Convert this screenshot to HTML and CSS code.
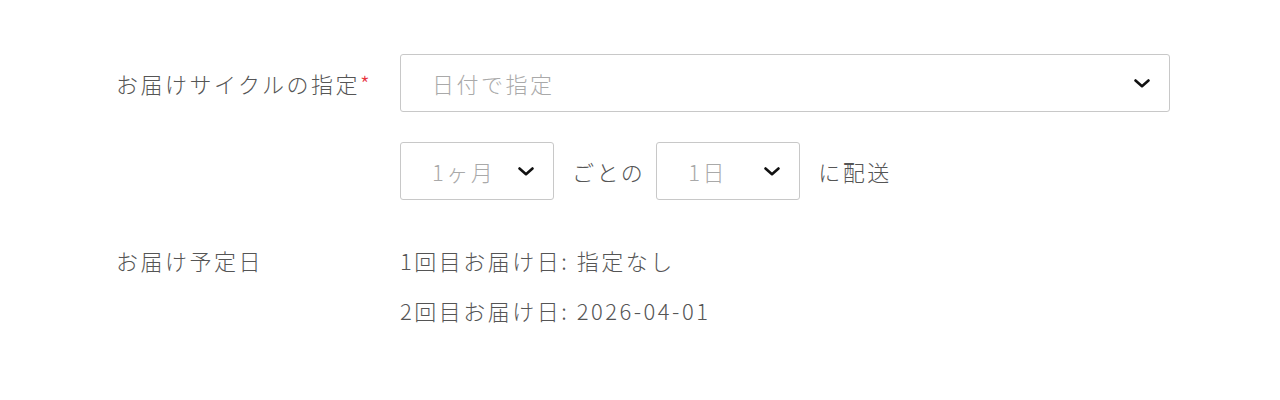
FILE: index.html
```html
<!DOCTYPE html>
<html lang="ja">
<head>
<meta charset="utf-8">
<link rel="stylesheet" href="styles.css">
</head>
<body>
<div class="form">
  <div class="row">
    <div class="label">お届けサイクルの指定<span class="req">*</span></div>
    <div class="field">
      <div class="select wide"><span class="ph">日付で指定</span>
        <svg class="chev" width="16" height="9" viewBox="0 0 16 9"><path d="M1.5 1.5 L8 7.2 L14.5 1.5" fill="none" stroke="#111" stroke-width="2.6" stroke-linecap="round" stroke-linejoin="round"/></svg>
      </div>
    </div>
  </div>
  <div class="row">
    <div class="label"></div>
    <div class="field inline">
      <div class="select s1"><span class="ph">1ヶ月</span>
        <svg class="chev" width="16" height="9" viewBox="0 0 16 9"><path d="M1.5 1.5 L8 7.2 L14.5 1.5" fill="none" stroke="#111" stroke-width="2.6" stroke-linecap="round" stroke-linejoin="round"/></svg>
      </div>
      <span class="txt">ごとの</span>
      <div class="select s2"><span class="ph">1日</span>
        <svg class="chev" width="16" height="9" viewBox="0 0 16 9"><path d="M1.5 1.5 L8 7.2 L14.5 1.5" fill="none" stroke="#111" stroke-width="2.6" stroke-linecap="round" stroke-linejoin="round"/></svg>
      </div>
      <span class="txt">に配送</span>
    </div>
  </div>
  <div class="row dates">
    <div class="label">お届け予定日</div>
    <div class="field list">
      <div class="line">1回目お届け日: 指定なし</div>
      <div class="line">2回目お届け日: 2026-04-01</div>
    </div>
  </div>
</div>
</body>
</html>
```
FILE: styles.css
```css
html, body {
  margin: 0;
  padding: 0;
  background: #fff;
}
body {
  font-family: "Noto Sans CJK JP", "Noto Sans", sans-serif;
  font-size: 22px;
  font-weight: 300;
  color: #555;
  letter-spacing: 2.5px;
}
.form {
  padding: 54px 0 0 116px;
  display: flex;
  flex-direction: column;
  gap: 30px;
}
.row {
  display: flex;
  align-items: center;
}
.label {
  width: 284px;
  flex: none;
}
.req {
  color: #e8343e;
}
.field {
  display: flex;
}
.inline {
  align-items: center;
  gap: 18px;
}
.txt {
  margin-right: -7px;
}
.select {
  box-sizing: border-box;
  height: 58px;
  border: 1px solid #c8c8c8;
  border-radius: 3px;
  display: flex;
  align-items: center;
  justify-content: space-between;
  padding: 0 19px 0 31px;
  background: #fff;
}
.wide {
  width: 770px;
}
.s1 {
  width: 154px;
}
.s2 {
  width: 144px;
}
.ph {
  color: #a9a9a9;
}
.chev {
  display: block;
}
.dates {
  align-items: flex-start;
  margin-top: 15px;
}
.list {
  flex-direction: column;
  gap: 20px;
}
.line {
  line-height: 30px;
}
.dates .label {
  line-height: 30px;
}
```
